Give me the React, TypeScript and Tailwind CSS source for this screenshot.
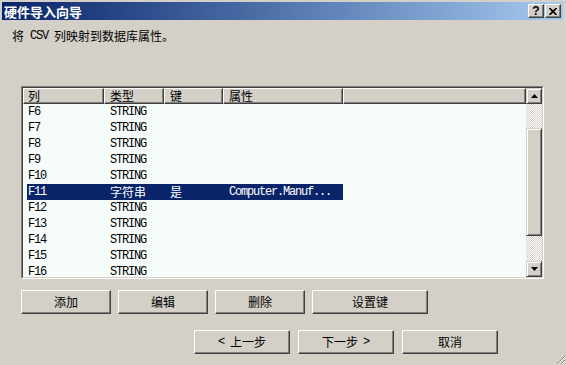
import React from 'react';

type Row = { col: string; type: string; key?: string; attr?: string; selected?: boolean };

const rows: Row[] = [
  { col: 'F6', type: 'STRING' },
  { col: 'F7', type: 'STRING' },
  { col: 'F8', type: 'STRING' },
  { col: 'F9', type: 'STRING' },
  { col: 'F10', type: 'STRING' },
  { col: 'F11', type: '字符串', key: '是', attr: 'Computer.Manuf...', selected: true },
  { col: 'F12', type: 'STRING' },
  { col: 'F13', type: 'STRING' },
  { col: 'F14', type: 'STRING' },
  { col: 'F15', type: 'STRING' },
  { col: 'F16', type: 'STRING' },
];

const cjk = "font-['Noto_Sans_CJK_SC',sans-serif]";
const hasCjk = (s: string) => /[^\x00-\x7f]/.test(s);

function Cell({ text, width, first }: { text?: string; width: string; first?: boolean }) {
  const font = text && hasCjk(text)
    ? "font-['Noto_Sans_CJK_SC',sans-serif] text-[12px]"
    : "font-['Liberation_Mono','Noto_Sans_CJK_SC',monospace] text-[12px] tracking-[-1.2px]";
  return (
    <div className={`${width} ${first ? 'pl-[1px]' : 'pl-[6px]'} h-full flex items-center whitespace-nowrap overflow-hidden ${font}`}>
      {text}
    </div>
  );
}

function HeaderCell({ text, width, first }: { text?: string; width: string; first?: boolean }) {
  return (
    <div
      className={`${width} h-full flex items-center ${first ? 'pl-[4px]' : 'pl-[5px]'} border-t border-l border-t-white border-l-white border-b border-r border-b-[#404040] border-r-[#404040] shadow-[inset_-1px_-1px_#808080] text-[12px] leading-none text-black ${cjk}`}
    >
      {text}
    </div>
  );
}

function ScrollButton({ up }: { up?: boolean }) {
  return (
    <div className="h-[16px] w-full flex items-center justify-center bg-[#d4d0c8] border-t border-l border-t-[#d4d0c8] border-l-[#d4d0c8] border-b border-r border-b-[#404040] border-r-[#404040] shadow-[inset_1px_1px_white,inset_-1px_-1px_#808080]">
      <svg width="7" height="4" viewBox="0 0 7 4">
        {up ? <path d="M3.5 0 L7 4 L0 4 Z" fill="black" /> : <path d="M0 0 L7 0 L3.5 4 Z" fill="black" />}
      </svg>
    </div>
  );
}

function Button({ children, width }: { children: React.ReactNode; width: string }) {
  return (
    <div
      className={`${width} h-[24px] flex items-center justify-center gap-[5px] bg-[#d4d0c8] border-t border-l border-t-white border-l-white border-b border-r border-b-[#404040] border-r-[#404040] shadow-[inset_-1px_-1px_#808080] text-[12px] text-black ${cjk}`}
    >
      {children}
    </div>
  );
}

const arrow = "font-['Liberation_Mono',monospace] text-[12px]";

export default function App() {
  return (
    <div className="w-[566px] h-[365px] bg-[#d4d0c8] relative overflow-hidden">
      <div className="pt-[2px] pl-[2px] pr-[3px]">
        <div className="h-[18px] flex items-center justify-between bg-linear-to-r from-[#0a246a] to-[#a6caf0] pl-[2px] pr-[2px]">
          <span className={`text-white font-bold text-[13px] leading-none ${cjk}`}>硬件导入向导</span>
          <div className="flex gap-[1px]">
            <div className="w-[16px] h-[14px] flex items-center justify-center bg-[#d4d0c8] border-t border-l border-t-white border-l-white border-b border-r border-b-[#404040] border-r-[#404040] shadow-[inset_-1px_-1px_#808080] font-['Liberation_Sans',sans-serif] font-bold text-[12px] leading-none text-black">
              ?
            </div>
            <div className="w-[16px] h-[14px] flex items-center justify-center bg-[#d4d0c8] border-t border-l border-t-white border-l-white border-b border-r border-b-[#404040] border-r-[#404040] shadow-[inset_-1px_-1px_#808080]">
              <svg width="8" height="7" viewBox="0 0 8 7">
                <path d="M0.5 0 L7.5 7 M7.5 0 L0.5 7" stroke="black" strokeWidth="1.6" />
              </svg>
            </div>
          </div>
        </div>
      </div>

      <div className="pl-[12px] mt-[8px] h-[16px] flex items-center text-[12px] text-black whitespace-pre">
        <span className={cjk}>将</span>
        <span className="font-['Liberation_Mono',monospace] text-[12px] tracking-[-1.2px]"> CSV </span>
        <span className={cjk}>列映射到数据库属性。</span>
      </div>

      <div className="ml-[21px] mt-[42px] w-[523px] h-[193px] flex border-t border-l border-t-[#808080] border-l-[#808080] border-b border-r border-b-white border-r-white">
        <div className="flex-1 flex border-t border-l border-t-[#404040] border-l-[#404040] border-b border-r border-b-[#d4d0c8] border-r-[#d4d0c8]">
          <div className="flex-1 flex flex-col min-w-0">
            <div className="h-[16px] flex shrink-0">
              <HeaderCell text="列" width="w-[81px]" first />
              <HeaderCell text="类型" width="w-[60px]" />
              <HeaderCell text="键" width="w-[59px]" />
              <HeaderCell text="属性" width="w-[120px]" />
              <HeaderCell width="flex-1" />
            </div>
            <div className="flex-1 bg-[#f6fcf9] overflow-hidden">
              {rows.map((r) => (
                <div key={r.col} className="h-[16px] pl-[4px] flex">
                  <div
                    className={
                      r.selected
                        ? 'h-full flex bg-[#0a246a] text-white'
                        : 'h-full flex text-black'
                    }
                  >
                    <Cell text={r.col} width="w-[77px]" first />
                    <Cell text={r.type} width="w-[60px]" />
                    <Cell text={r.key} width="w-[59px]" />
                    <Cell text={r.attr} width="w-[120px]" />
                  </div>
                </div>
              ))}
            </div>
          </div>
          <div className="w-[16px] flex flex-col">
            <ScrollButton up />
            <div className="h-[24px] bg-[image:repeating-conic-gradient(#d4d0c8_0%_25%,#ffffff_0%_50%)] bg-[length:2px_2px]" />
            <div className="h-[108px] bg-[#d4d0c8] border-t border-l border-t-[#d4d0c8] border-l-[#d4d0c8] border-b border-r border-b-[#404040] border-r-[#404040] shadow-[inset_1px_1px_white,inset_-1px_-1px_#808080]" />
            <div className="flex-1 bg-[image:repeating-conic-gradient(#d4d0c8_0%_25%,#ffffff_0%_50%)] bg-[length:2px_2px]" />
            <ScrollButton />
          </div>
        </div>
      </div>

      <div className="ml-[21px] mt-[11px] flex gap-[7px]">
        <Button width="w-[90px]">添加</Button>
        <Button width="w-[90px]">编辑</Button>
        <Button width="w-[90px]">删除</Button>
        <Button width="w-[116px]">设置键</Button>
      </div>

      <div className="ml-[194px] mt-[16px] flex gap-[8px]">
        <Button width="w-[96px]">
          <span className={arrow}>&lt;</span>
          <span>上一步</span>
        </Button>
        <Button width="w-[96px]">
          <span>下一步</span>
          <span className={arrow}>&gt;</span>
        </Button>
        <Button width="w-[96px]">取消</Button>
      </div>

      <svg className="absolute right-0 bottom-0" width="12" height="12" viewBox="0 0 12 12">
        <path d="M11 3 L3 11 M11 7 L7 11" stroke="#808080" strokeWidth="1" />
        <path d="M11 4 L4 11 M11 8 L8 11" stroke="white" strokeWidth="1" />
      </svg>
    </div>
  );
}
